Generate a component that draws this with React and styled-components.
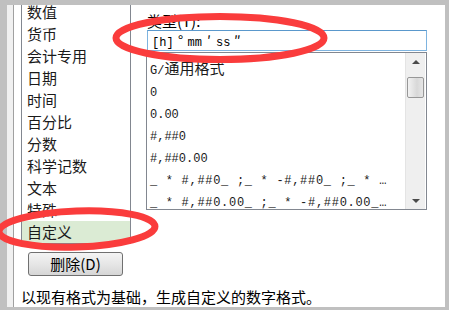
import styled, { createGlobalStyle } from "styled-components";

const categories = ["数值", "货币", "会计专用", "日期", "时间", "百分比", "分数", "科学记数", "文本", "特殊", "自定义"];

const formats = [
    { code: "G/", cn: "通用格式" },
    { code: "0" },
    { code: "0.00" },
    { code: "#,##0" },
    { code: "#,##0.00" },
    { code: "_ * #,##0_ ;_ * -#,##0_ ;_ * …", wide: true },
    { code: "_ * #,##0.00_ ;_ * -#,##0.00_…", wide: true },
];

export default function App() {
    return (
        <>
            <Global />
            <Frame>
                <Edge />
                <Page>
                    <CategoryList>
                        {categories.map((c) => (
                            <Category key={c} selected={c === "自定义"}>{c}</Category>
                        ))}
                    </CategoryList>

                    <Right>
                        <Label>类型(T):</Label>
                        <TypeInput>
                            [h]<Sym>°</Sym>mm<Sym>′</Sym>ss<Sym>″</Sym>
                        </TypeInput>
                        <FormatList>
                            <Rows>
                                {formats.map((f) => (
                                    <FormatRow key={f.code}>
                                        <Code wide={f.wide}>{f.code}</Code>
                                        {f.cn && <Cn>{f.cn}</Cn>}
                                    </FormatRow>
                                ))}
                            </Rows>
                            <ScrollBar>
                                <Arrow><Triangle /></Arrow>
                                <Thumb />
                                <Spacer />
                                <Arrow><Triangle down /></Arrow>
                            </ScrollBar>
                        </FormatList>
                    </Right>

                    <DeleteButton>删除(D)</DeleteButton>

                    <Hint>以现有格式为基础，生成自定义的数字格式。</Hint>
                </Page>

                <Marks viewBox="0 0 449 310">
                    <ellipse cx="220" cy="38" rx="104" ry="21.5" />
                    <ellipse cx="77" cy="229" rx="78" ry="18" transform="rotate(-2 77 229)" />
                </Marks>
            </Frame>
        </>
    );
}

const Global = createGlobalStyle`
    html, body {
        margin: 0;
        background: #c0c0c0;
    }
    body {
        font-family: "Noto Sans CJK SC", "Liberation Sans", sans-serif;
        color: #000;
    }
`;

const Frame = styled.div`
    position: relative;
    width: 449px;
    height: 310px;
    box-sizing: border-box;
    padding: 5px 4px 3px 7px;
    display: flex;
    background: #c0c0c0;
    overflow: hidden;
`;

const Edge = styled.div`
    width: 6px;
    background: #f0f0f0;
    border-right: 1px solid #a0a0a0;
`;

const Page = styled.div`
    flex: 1;
    background: #fff;
    overflow: hidden;
    display: grid;
    grid-template-columns: 110px 281px;
    grid-template-rows: auto auto 1fr;
    column-gap: 15px;
    padding-left: 7px;
    align-items: start;
`;

const CategoryList = styled.div`
    margin-top: -5px;
    border: 1px solid #828790;
    display: flex;
    flex-direction: column;
`;

const Category = styled.div`
    height: 22px;
    line-height: 22px;
    padding-left: 5px;
    font-size: 15px;
    color: #1a1a1a;
    background: ${(p) => (p.selected ? "#dbebd4" : "transparent")};
`;

const Right = styled.div`
    display: flex;
    flex-direction: column;
`;

const Label = styled.div`
    margin-top: 7px;
    height: 18px;
    line-height: 18px;
    padding-left: 1px;
    font-size: 15px;
`;

const TypeInput = styled.div`
    margin-left: 1px;
    height: 21px;
    box-sizing: border-box;
    border: 1px solid #7eb4e0;
    border-top-color: #5a98cc;
    padding-left: 4px;
    line-height: 19px;
    font-family: "Liberation Mono", monospace;
    font-size: 12px;
    white-space: pre;
`;

const Sym = styled.span`
    font-family: "Noto Sans CJK SC", sans-serif;
    font-size: 14px;
    display: inline-block;
    width: 14px;
    text-align: center;
`;

const FormatList = styled.div`
    margin-top: 1px;
    height: 158px;
    box-sizing: border-box;
    border: 1px solid #828790;
    display: flex;
    overflow: hidden;
`;

const Rows = styled.div`
    flex: 1;
    padding-top: 3px;
    overflow: hidden;
`;

const FormatRow = styled.div`
    height: 22px;
    line-height: 22px;
    padding-left: 3px;
    white-space: nowrap;
    color: #1a1a1a;
`;

const Code = styled.span`
    font-family: "Liberation Mono", monospace;
    font-size: 12px;
    letter-spacing: ${(p) => (p.wide ? "0.7px" : "0")};
`;

const Cn = styled.span`
    font-size: 15px;
`;

const ScrollBar = styled.div`
    width: 19px;
    margin-right: 1px;
    background: #efefef;
    border-left: 1px solid #e4e4e4;
    display: flex;
    flex-direction: column;
`;

const Arrow = styled.div`
    height: 17px;
    display: flex;
    align-items: center;
    justify-content: center;
`;

const Triangle = styled.div`
    width: 0;
    height: 0;
    border-left: 4px solid transparent;
    border-right: 4px solid transparent;
    ${(p) => (p.down ? "border-top: 4px solid #4a4a4a;" : "border-bottom: 4px solid #4a4a4a;")}
`;

const Thumb = styled.div`
    margin: 7px 1px 0 1px;
    height: 21px;
    box-sizing: border-box;
    border: 1px solid #979797;
    border-radius: 2px;
    background: linear-gradient(to right, #f2f2f2, #d8d8d8 60%, #e6e6e6);
`;

const Spacer = styled.div`
    flex: 1;
`;

const DeleteButton = styled.div`
    grid-column: 1;
    margin: 8px 0 0 7px;
    width: 95px;
    height: 24px;
    box-sizing: border-box;
    border: 1px solid #707070;
    border-radius: 3px;
    background: linear-gradient(#f4f4f4, #e6e6e6 50%, #d6d6d6);
    text-align: center;
    line-height: 22px;
    font-size: 15px;
`;

const Hint = styled.div`
    grid-column: 1 / -1;
    margin-top: 11px;
    line-height: 20px;
    font-size: 15px;
    white-space: nowrap;
`;

const Marks = styled.svg`
    position: absolute;
    left: 0;
    top: 0;
    width: 449px;
    height: 310px;
    pointer-events: none;
    fill: none;
    stroke: #fa3c3c;
    stroke-width: 7;
`;
